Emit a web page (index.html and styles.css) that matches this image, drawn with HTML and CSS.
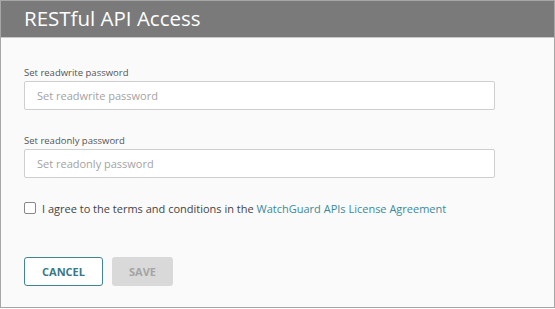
FILE: index.html
```html
<!DOCTYPE html>
<html lang="en">

<head>
    <meta charset="UTF-8">
    <meta name="viewport" content="width=device-width, initial-scale=1.0">
    <title>RESTful API Access</title>
    <link rel="stylesheet" href="styles.css">
</head>

<body>
    <div class="dialog">
        <div class="dialog_header">RESTful API Access</div>

        <div class="dialog_body">
            <!-- 密码输入 -->
            <div class="field">
                <label class="field_label" for="rw">Set readwrite password</label>
                <input class="field_input" id="rw" type="password" placeholder="Set readwrite password">
            </div>
            <div class="field">
                <label class="field_label" for="ro">Set readonly password</label>
                <input class="field_input" id="ro" type="password" placeholder="Set readonly password">
            </div>

            <!-- 协议 -->
            <label class="agree">
                <span class="agree_box"></span>
                <span>I agree to the terms and conditions in the <a href="javascript:;">WatchGuard APIs License Agreement</a></span>
            </label>

            <!-- 按钮 -->
            <div class="actions">
                <button class="btn btn_cancel">CANCEL</button>
                <button class="btn btn_save" disabled>SAVE</button>
            </div>
        </div>
    </div>
</body>

</html>
```

FILE: styles.css
```css
* {
    margin: 0;
    padding: 0;
    box-sizing: border-box;
}

body {
    font-family: "Open Sans", "Noto Sans", sans-serif;
    background-color: #fff;
}

.dialog {
    width: 555px;
    height: 308px;
    border: 1px solid #a6a6a6;
    background-color: #fafafa;
}

.dialog_header {
    height: 37px;
    line-height: 35px;
    padding-left: 23px;
    font-size: 20.5px;
    color: #fff;
    background-color: #7a7a7a;
    border-bottom: 1px solid #c9c9c9;
}

.dialog_body {
    padding: 0 23px;
}

.field {
    display: flex;
    flex-direction: column;
    margin-top: 28px;
}

.field + .field {
    margin-top: 24px;
}

.field_label {
    font-size: 9.5px;
    line-height: 14px;
    color: #555;
    margin-bottom: 1px;
}

.field_input {
    width: 471px;
    height: 29px;
    border: 1px solid #cfcfcf;
    border-radius: 2px;
    background-color: #fff;
    padding: 0 12px;
    font-family: inherit;
    font-size: 11px;
    color: #333;
    outline: none;
}

.field_input::placeholder {
    color: #a3a3a3;
}

/* 协议勾选 */
.agree {
    display: flex;
    align-items: center;
    gap: 6px;
    margin-top: 21px;
    height: 18px;
    font-size: 11px;
    color: #444;
}

.agree_box {
    width: 12px;
    height: 12px;
    border: 1px solid #888;
    border-radius: 2px;
    background-color: #fff;
}

.agree a {
    color: #3b8a9c;
    text-decoration: none;
}

.actions {
    display: flex;
    gap: 9px;
    margin-top: 40px;
}

.btn {
    height: 29px;
    border-radius: 3px;
    font-family: inherit;
    font-size: 11px;
    font-weight: 700;
}

.btn_cancel {
    width: 79px;
    border: 1px solid #3f8592;
    background-color: #fff;
    color: #3a7885;
}

.btn_save {
    width: 61px;
    border: none;
    background-color: #d9d9d9;
    color: #a4a4a4;
}
```
